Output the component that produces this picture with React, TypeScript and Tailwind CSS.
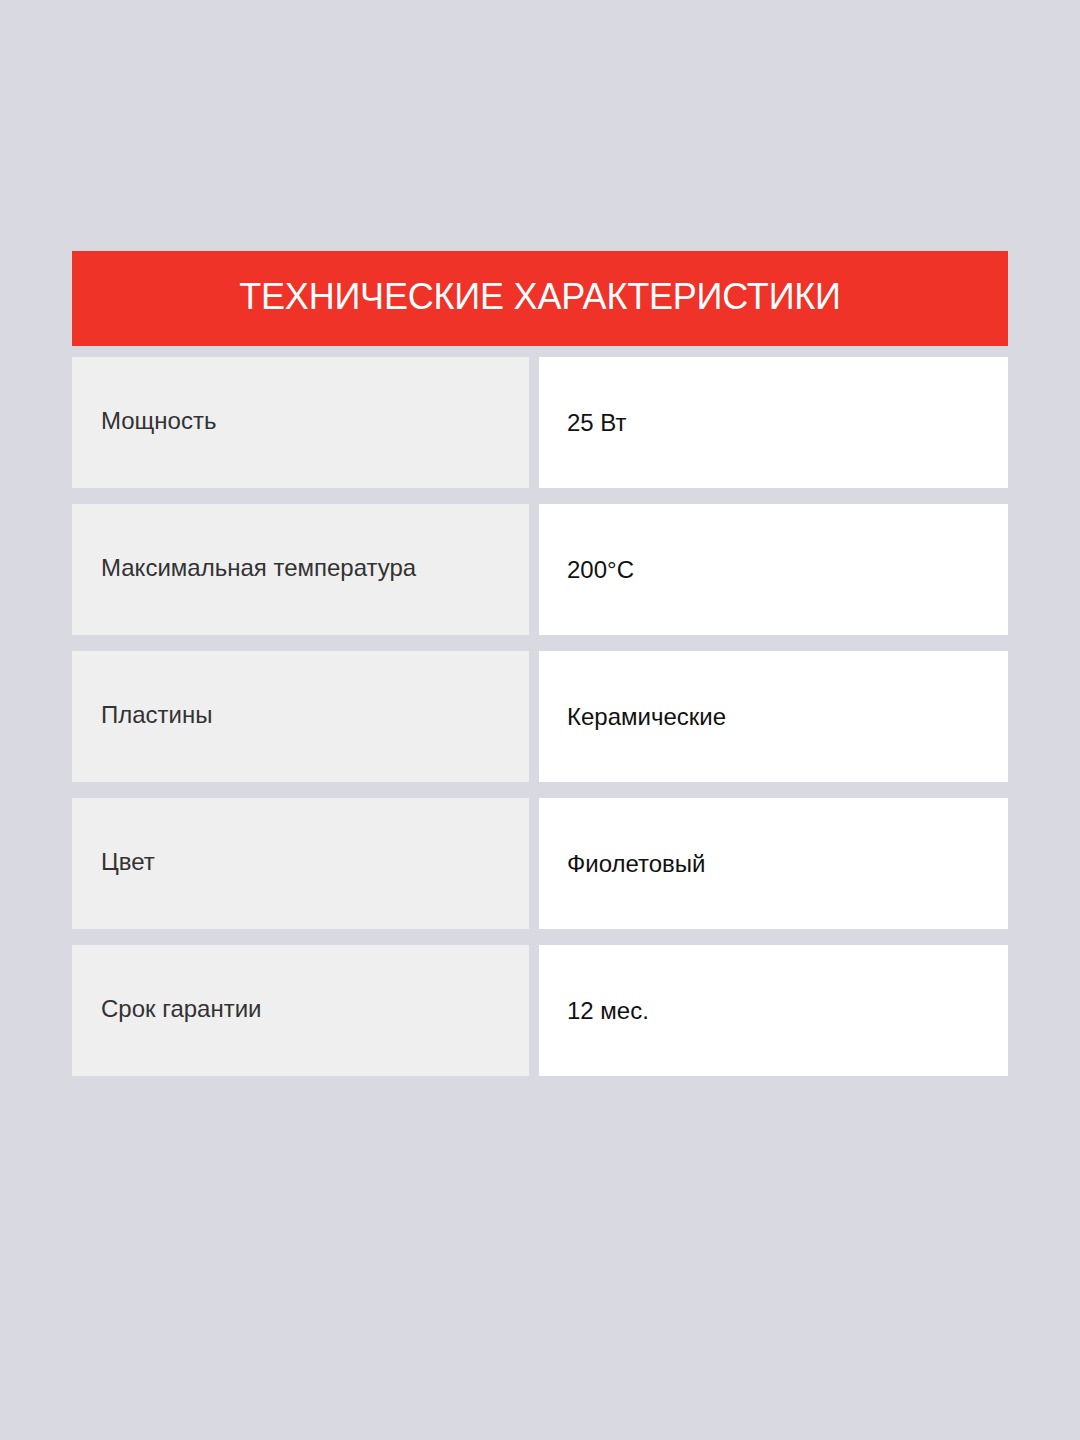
import React from 'react';

const specs: [string, string][] = [
  ['Мощность', '25 Вт'],
  ['Максимальная температура', '200°C'],
  ['Пластины', 'Керамические'],
  ['Цвет', 'Фиолетовый'],
  ['Срок гарантии', '12 мес.'],
];

const App: React.FC = () => {
  return (
    <div className="min-h-[1440px] w-full bg-[#d8d9e1] pt-[251px] px-[72px] font-['Liberation_Sans',Arial,sans-serif]">
      {/* Header */}
      <div className="h-[95px] bg-[#ef3328] flex items-center justify-center pb-1">
        <h1 className="text-white text-[36px] tracking-[-0.2px]">ТЕХНИЧЕСКИЕ ХАРАКТЕРИСТИКИ</h1>
      </div>

      {/* Rows */}
      <div className="mt-[11px] flex flex-col gap-4">
        {specs.map(([label, value]) => (
          <div key={label} className="flex gap-[10px] h-[131px]">
            <div className="w-[457px] bg-[#efefef] flex items-center pl-[29px] text-[24px] text-[#333333] pb-1">
              {label}
            </div>
            <div className="flex-1 bg-white flex items-center pl-[28px] text-[24px] text-[#111111]">
              {value}
            </div>
          </div>
        ))}
      </div>
    </div>
  );
};

export default App;
